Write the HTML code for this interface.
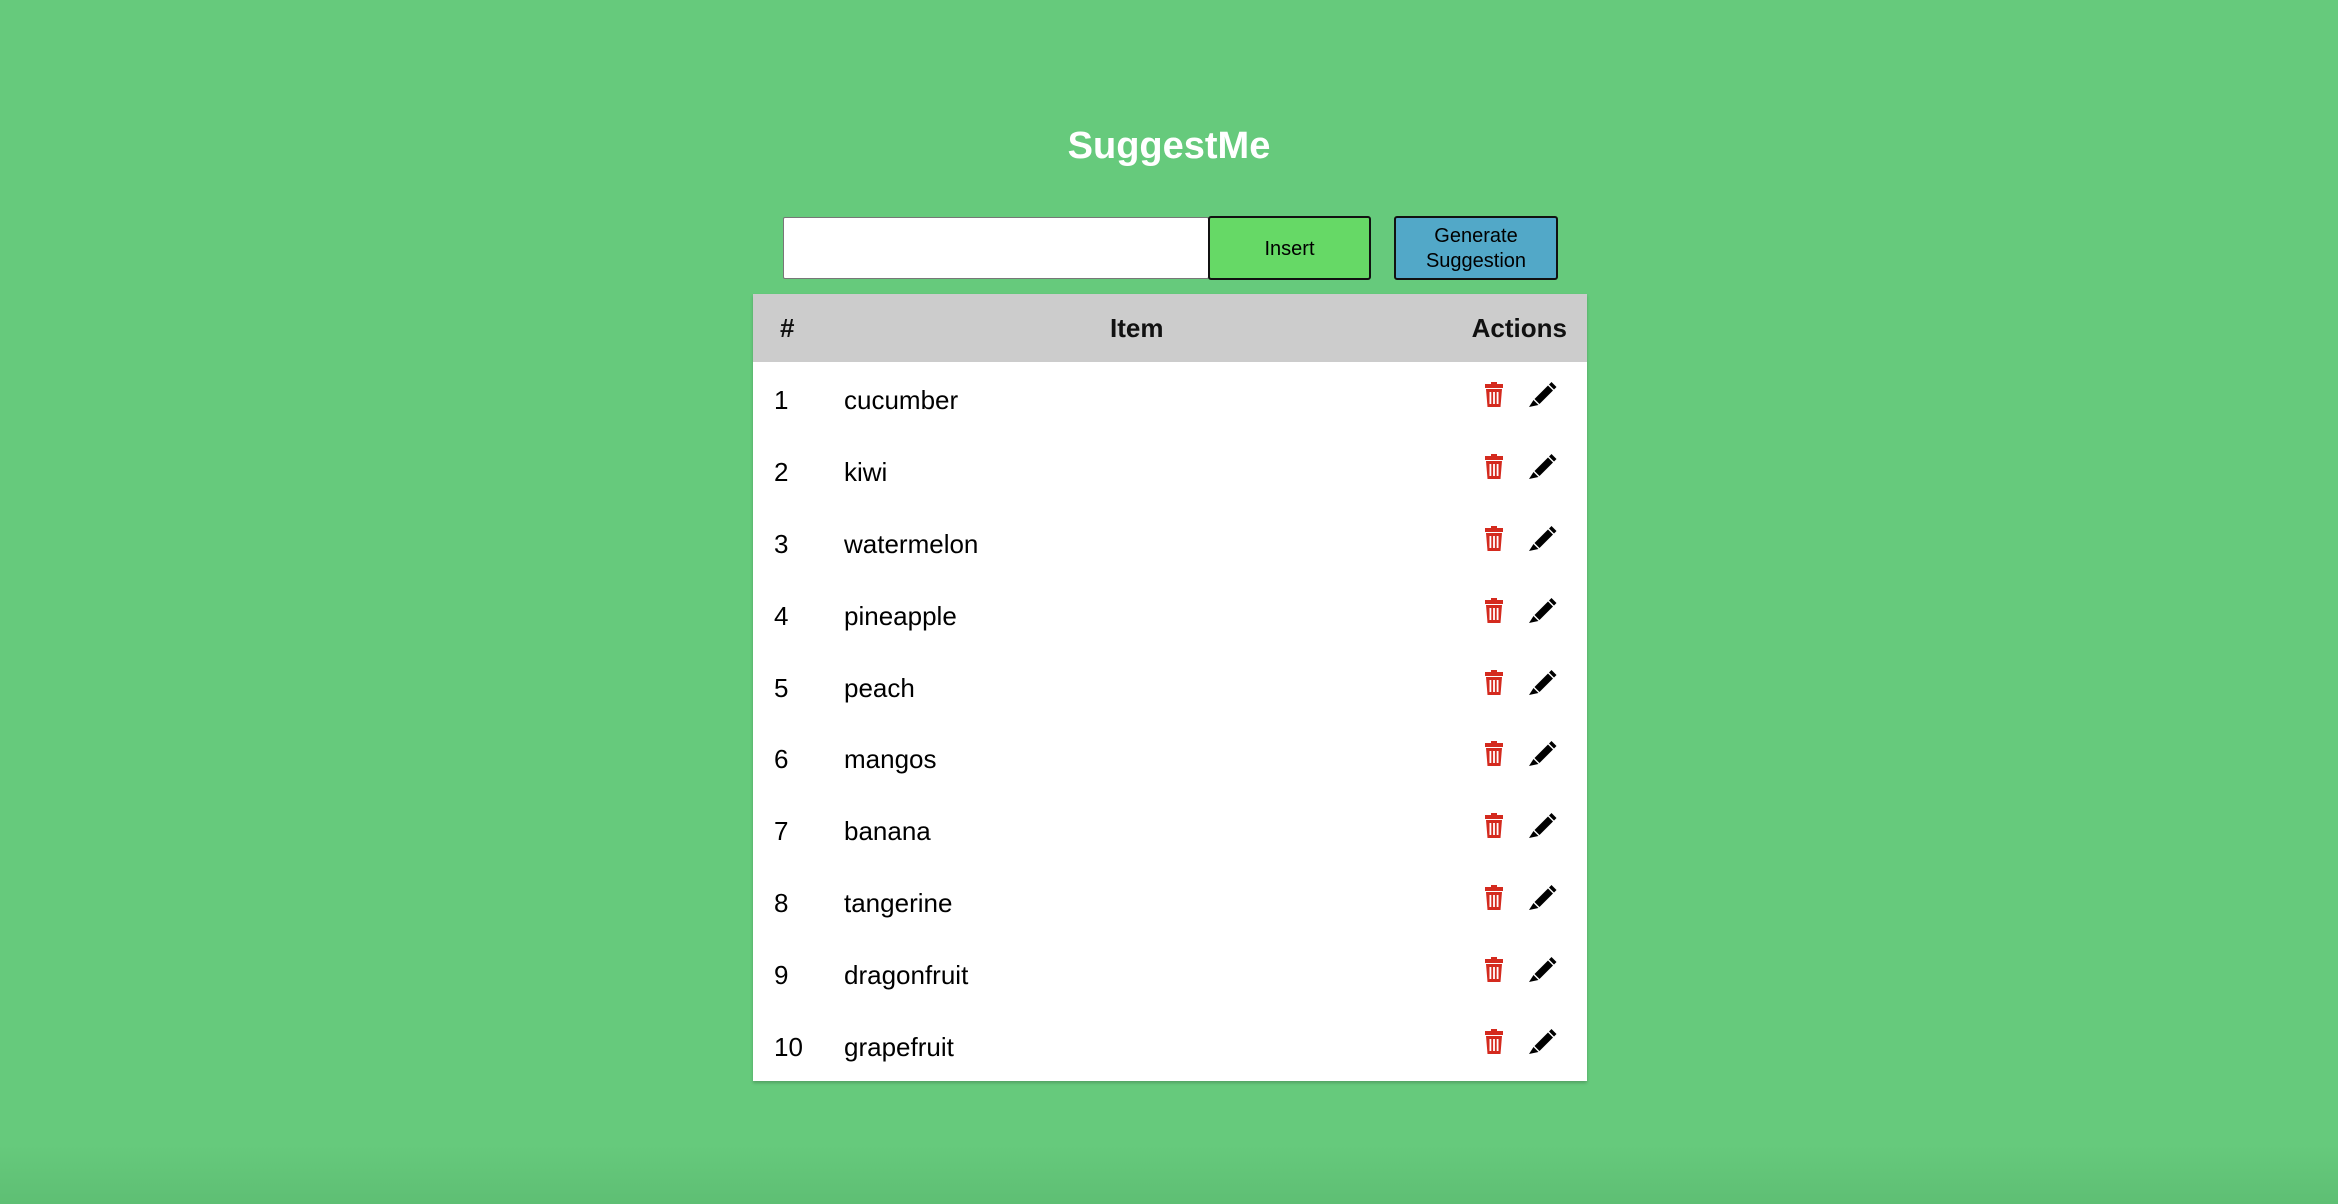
<!DOCTYPE html>
<html><head><meta charset="utf-8"><style>
html,body{margin:0;padding:0}
body{width:2338px;height:1204px;overflow:hidden;background:#66ca7c;font-family:"Liberation Sans",Arial,sans-serif;position:relative}
.shade{position:absolute;left:0;right:0;bottom:0;height:60px;background:linear-gradient(to bottom,rgba(0,0,0,0),rgba(0,60,20,0.08))}
h1{position:absolute;left:0;right:0;top:122px;margin:0;text-align:center;color:#fff;font-size:38px;font-weight:bold;line-height:48px}
.inp{position:absolute;left:783px;top:217px;width:426px;height:62px;background:#fff;border:1px solid #777;box-sizing:border-box;border-radius:2px}
.btn{position:absolute;top:216px;height:64px;box-sizing:border-box;border:2px solid #111;border-radius:3px;display:flex;align-items:center;justify-content:center;text-align:center;font-size:20px;line-height:25px;color:#000;padding-top:2px}
.ins{left:1208px;width:163px;background:#66d966}
.gen{left:1394px;width:164px;background:#52a8c8}
.tbl{position:absolute;left:753px;top:294px;width:834px;height:787px;background:#fff;box-shadow:0 2px 3px rgba(0,0,0,0.2)}
.hd{height:68px;background:#cccccc;position:relative;font-weight:bold;font-size:26px;color:#111}
.hd span{position:absolute;top:19px;line-height:30px}
.row{height:71.9px;position:relative;font-size:26px;color:#000}
.row .n{position:absolute;left:21px;top:23px;line-height:30px}
.row .t{position:absolute;left:91px;top:23px;line-height:30px}
.row svg{position:absolute}
</style></head><body>
<div class="shade"></div>
<h1>SuggestMe</h1>
<div class="inp"></div>
<div class="btn ins">Insert</div>
<div class="btn gen">Generate<br>Suggestion</div>
<div class="tbl">
<div class="hd"><span style="left:27px">#</span><span style="left:357px">Item</span><span style="right:20px">Actions</span></div>
<div id="rows"></div>
</div>
<script>
var items=["cucumber","kiwi","watermelon","pineapple","peach","mangos","banana","tangerine","dragonfruit","grapefruit"];
var h="";
items.forEach(function(it,i){
h+='<div class="row"><span class="n">'+(i+1)+'</span><span class="t">'+it+'</span>'+
'<svg style="left:731px;top:20px" width="20" height="25" viewBox="0 0 20 25"><path fill="#d42a1e" d="M7 0h6v2h6v4H1V2h6z M2 7h16l-1.5 18h-13z"/><path fill="#fff" d="M5.5 10h1.8v12H5.5z M9.1 10h1.8v12H9.1z M12.7 10h1.8v12h-1.8z"/></svg>'+
'<svg style="left:776px;top:20px" width="28" height="25" viewBox="0 0 28 25"><path fill="#000" d="M22.5 0l5 5-2.5 2.5-5-5z M19 3.5l5 5L10.5 22l-5-5z M4.5 18l5 5L0 25z"/></svg></div>';
});
document.getElementById("rows").innerHTML=h;
</script>
</body></html>
